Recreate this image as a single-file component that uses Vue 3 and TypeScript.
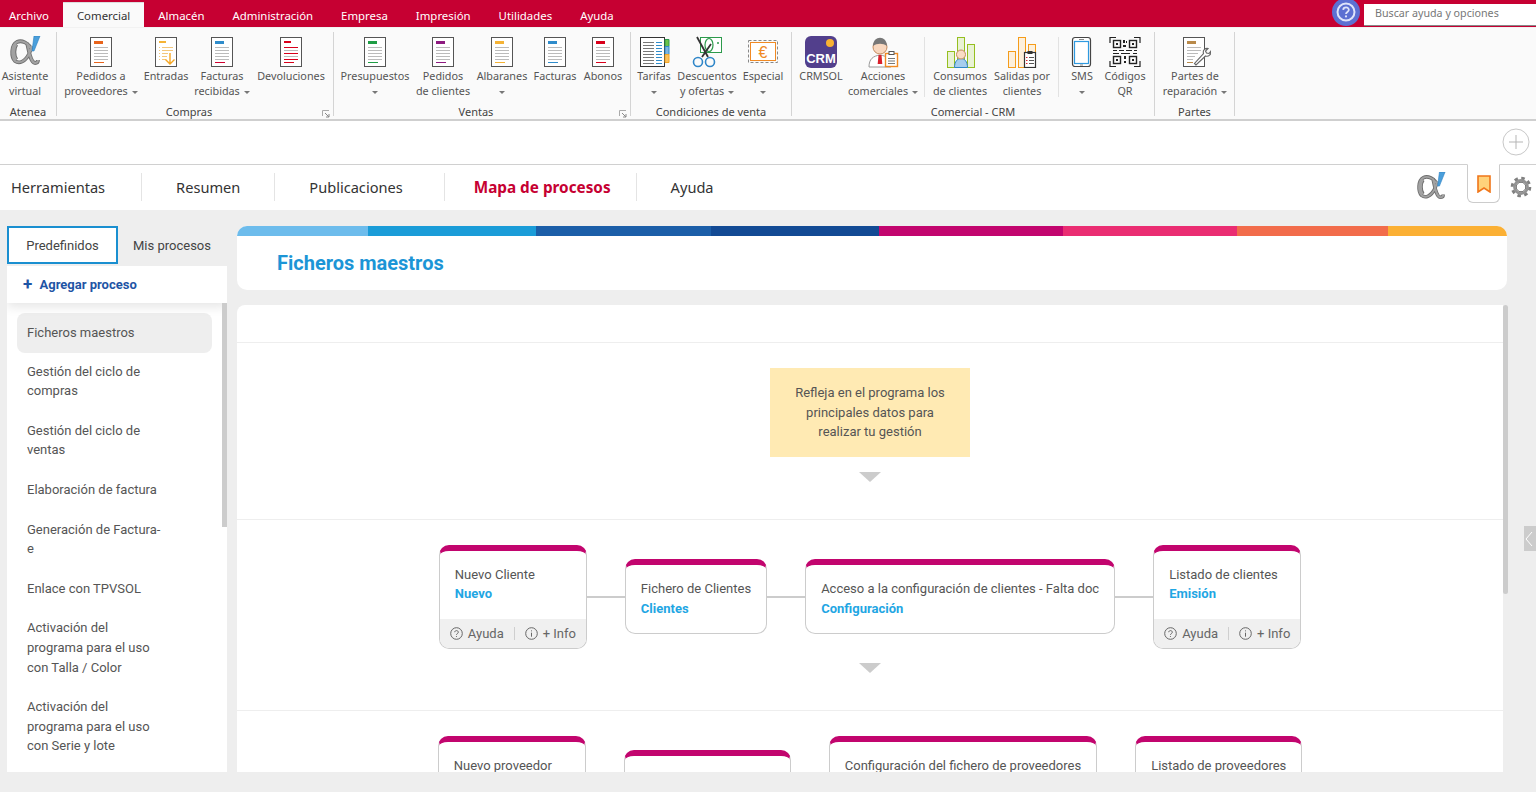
<script setup lang="ts">
interface Tool {
  lines: string[]
  w: number
  icon: string
  color?: string
  foot?: string
  caret?: boolean
}

interface Group {
  label: string
  width: number
  launcher?: boolean
  sets: Tool[][]
}

interface FlowCard {
  title: string
  link: string
  footer?: boolean
}

const menu = ['Almacén', 'Administración', 'Empresa', 'Impresión', 'Utilidades', 'Ayuda']

const groups: Group[] = [
  {
    label: 'Atenea',
    width: 57,
    sets: [[{ lines: ['Asistente', 'virtual'], w: 50, icon: 'alpha' }]]
  },
  {
    label: 'Compras',
    width: 277,
    launcher: true,
    sets: [[
      { lines: ['Pedidos a', 'proveedores'], w: 78, icon: 'doc', color: '#e8641c', caret: true },
      { lines: ['Entradas'], w: 50, icon: 'entry' },
      { lines: ['Facturas', 'recibidas'], w: 60, icon: 'doc', color: '#2f8ccb', foot: '#d0002f', caret: true },
      { lines: ['Devoluciones'], w: 76, icon: 'return' }
    ]]
  },
  {
    label: 'Ventas',
    width: 297,
    launcher: true,
    sets: [[
      { lines: ['Presupuestos', ''], w: 74, icon: 'doc', color: '#1f9d45', caret: true },
      { lines: ['Pedidos', 'de clientes'], w: 60, icon: 'doc', color: '#8e1a80' },
      { lines: ['Albaranes', ''], w: 56, icon: 'doc', color: '#f5b335', caret: true },
      { lines: ['Facturas'], w: 48, icon: 'doc', color: '#2f8ccb' },
      { lines: ['Abonos'], w: 46, icon: 'doc', color: '#d9001b' }
    ]]
  },
  {
    label: 'Condiciones de venta',
    width: 161,
    sets: [[
      { lines: ['Tarifas', ''], w: 38, icon: 'rates', caret: true },
      { lines: ['Descuentos', 'y ofertas'], w: 66, icon: 'cut', caret: true },
      { lines: ['Especial', ''], w: 44, icon: 'euro', caret: true }
    ]]
  },
  {
    label: 'Comercial - CRM',
    width: 363,
    sets: [
      [
        { lines: ['CRMSOL'], w: 50, icon: 'crm' },
        { lines: ['Acciones', 'comerciales'], w: 72, icon: 'person', caret: true }
      ],
      [
        { lines: ['Consumos', 'de clientes'], w: 60, icon: 'usage' },
        { lines: ['Salidas por', 'clientes'], w: 62, icon: 'output' }
      ],
      [
        { lines: ['SMS', ''], w: 36, icon: 'phone', caret: true },
        { lines: ['Códigos', 'QR'], w: 48, icon: 'qr' }
      ]
    ]
  },
  {
    label: 'Partes',
    width: 80,
    sets: [[{ lines: ['Partes de', 'reparación'], w: 72, icon: 'repair', caret: true }]]
  }
]

const navItems = ['Herramientas', 'Resumen', 'Publicaciones', 'Mapa de procesos', 'Ayuda']

const processes = [
  'Ficheros maestros',
  'Gestión del ciclo de compras',
  'Gestión del ciclo de ventas',
  'Elaboración de factura',
  'Generación de Factura-e',
  'Enlace con TPVSOL',
  'Activación del programa para el uso con Talla / Color',
  'Activación del programa para el uso con Serie y lote'
]

const stripes = [
  { color: '#6dbcec', w: 131 },
  { color: '#1a9cd8', w: 168 },
  { color: '#1b5ea8', w: 175 },
  { color: '#124a94', w: 168 },
  { color: '#c2056e', w: 184 },
  { color: '#ea2d72', w: 174 },
  { color: '#f26c4b', w: 151 },
  { color: '#fbb034', w: 119 }
]

const flows: FlowCard[][] = [
  [
    { title: 'Nuevo Cliente', link: 'Nuevo', footer: true },
    { title: 'Fichero de Clientes', link: 'Clientes' },
    { title: 'Acceso a la configuración de clientes - Falta doc', link: 'Configuración' },
    { title: 'Listado de clientes', link: 'Emisión', footer: true }
  ],
  [
    { title: 'Nuevo proveedor', link: 'Nuevo', footer: true },
    { title: 'Fichero de proveedores', link: 'Proveedores' },
    { title: 'Configuración del fichero de proveedores', link: 'Configuración', footer: true },
    { title: 'Listado de proveedores', link: 'Emisión', footer: true }
  ]
]

const qrCells = [
  'M14 4h2v3h-2z', 'M17 5h1v2h-1z', 'M14 9h3v2h-3z', 'M4 14h4v1H4z', 'M10 14h5v1H10z',
  'M17 14h6v1h-6z', 'M25 14h3v1h-3z', 'M4 17h6v1H4z', 'M12 17h9v1h-9z', 'M24 17h4v1h-4z', 'M15 20h2v3h-2z',
  'M15 25h2v2h-2z'
]

const alphaBowl = 'M23 15C20 6 12 4 8 6 2 9 2 21 6 25c4 3 10 1 14-7l3-8M18 7c2 7 3 19 8 20 2 0 3-1 3-3'
</script>

<template>
  <div class="app">
    <div class="topbar">
      <div class="menu-item first">Archivo</div>
      <div class="menu-item active">Comercial</div>
      <div v-for="m in menu" :key="m" class="menu-item">{{ m }}</div>
      <div class="top-right">
        <svg class="help" width="30" height="30" viewBox="0 0 30 30">
          <circle cx="15" cy="14" r="14" fill="#5c70d2" />
          <circle cx="15" cy="14" r="8.5" fill="none" stroke="#dfe4fa" stroke-width="2" />
          <path d="M12.2 11.8c.3-3.4 5.800-3.200 5.600.2-.1 2-2.800 1.900-2.800 4" fill="none" stroke="#dfe4fa" stroke-width="1.8" />
          <circle cx="15" cy="18.4" r="1.1" fill="#dfe4fa" />
        </svg>
        <div class="search">Buscar ayuda y opciones</div>
      </div>
    </div>

    <div class="ribbon">
      <div v-for="g in groups" :key="g.label" class="group" :style="{ width: g.width + 'px' }">
        <div class="group-tools">
          <div v-for="(set, si) in g.sets" :key="si" class="tool-set">
            <div v-for="t in set" :key="t.lines.join()" class="tool" :style="{ width: t.w + 'px' }">
              <svg class="tool-icon" width="32" height="32" viewBox="0 0 32 32">
                <template v-if="t.icon === 'doc' || t.icon === 'return' || t.icon === 'entry'">
                  <rect x="5.5" y="1.5" width="21" height="29" fill="#fff" stroke="#555" />
                </template>
                <template v-if="t.icon === 'doc'">
                  <rect x="9" y="5" width="9" height="3" :fill="t.color" />
                  <path d="M9 11.500h14M9 14.500h14M9 17.500h14M9 20.500h14M9 23.500h14" stroke="#bbb" />
                  <path d="M9 26.500h10" :stroke="t.foot || t.color" />
                </template>
                <template v-else-if="t.icon === 'return'">
                  <rect x="9" y="5" width="7" height="2" fill="#d9001b" />
                  <path d="M9 11.500h14M9 17.500h14M9 23.500h14" stroke="#d9001b" />
                  <path d="M9 14.500h14M9 20.500h14" stroke="#bbb" />
                  <path d="M9 26.500h10" stroke="#d9001b" />
                </template>
                <template v-else-if="t.icon === 'entry'">
                  <rect x="9" y="5" width="7" height="2" fill="#f5b335" />
                  <path d="M9 11.500h1M9 14.500h1M9 17.500h1M9 20.500h1M9 23.500h1M12 11.500h11M12 14.500h11M12 17.500h6M12 20.500h5M12 23.500h4" stroke="#f3c77c" />
                  <path d="M20 17v11M15.500 23.500l4.500 4.500 4.500-4.500" fill="none" stroke="#f5a623" stroke-width="1.400" />
                </template>
                <template v-else-if="t.icon === 'alpha'">
                  <path :d="alphaBowl" fill="none" stroke="#6e6e6e" stroke-width="3.800" />
                  <path d="M7 8c-3 4-3 12 0 16" fill="none" stroke="#6e6e6e" stroke-width="5" />
                  <path :d="alphaBowl" fill="none" stroke="#a2a2a2" stroke-width="2" />
                  <path d="M7 8c-3 4-3 12 0 16" fill="none" stroke="#a2a2a2" stroke-width="3" />
                  <path d="M25 0h6l-6 15h-2z" fill="#4b9fdb" stroke="#2a7fc0" stroke-width=".6" />
                </template>
                <template v-else-if="t.icon === 'rates'">
                  <rect x="2.500" y="1.500" width="24" height="29" fill="#fff" stroke="#333" />
                  <path d="M27 3.500h4v7h-4z" fill="#6cc24a" stroke="#2c9a4b" />
                  <path d="M27 10.500h4v8h-4z" fill="#7fb5e0" stroke="#2f8ccb" />
                  <path d="M27 18.500h4v8h-4z" fill="#fbc25e" stroke="#f5a623" />
                  <path d="M5 6.500h11M5 9.500h11M5 12.500h11M5 15.500h11M5 18.500h11M5 21.500h11M5 24.500h11M5 27.500h11" stroke="#777" />
                  <path d="M18 6.500h6M18 9.500h6M18 12.500h6M18 15.500h6M18 18.500h6M18 21.500h6M18 24.500h6M18 27.500h6" stroke="#2f8ccb" />
                </template>
                <template v-else-if="t.icon === 'cut'">
                  <rect x="9.500" y="1.500" width="21" height="15" fill="#fff" stroke="#2c9a4b" />
                  <ellipse cx="18" cy="9" rx="4" ry="6.500" fill="none" stroke="#2c9a4b" stroke-width="1.200" />
                  <circle cx="27" cy="7" r="1" fill="#2c9a4b" />
                  <path d="M6 1l11 20M20 8l-9 13" stroke="#333" stroke-width="1.800" fill="none" />
                  <circle cx="7" cy="26" r="4.500" fill="none" stroke="#2f86c8" stroke-width="1.600" />
                  <circle cx="19" cy="26" r="4.500" fill="none" stroke="#2f86c8" stroke-width="1.600" />
                </template>
                <template v-else-if="t.icon === 'euro'">
                  <rect x="1.500" y="4.500" width="29" height="22" fill="none" stroke="#888" stroke-dasharray="3 2" />
                  <rect x="3.500" y="6.500" width="25" height="18" fill="#fff" stroke="#f08a24" />
                  <text x="16" y="21.500" text-anchor="middle" font-size="16" fill="#f08a24" font-family="Liberation Sans">€</text>
                </template>
                <template v-else-if="t.icon === 'crm'">
                  <rect x="0" y="0" width="32" height="32" rx="6" fill="#523f8c" />
                  <circle cx="25" cy="7" r="4" fill="#f9b233" />
                  <text x="16" y="27" text-anchor="middle" font-size="13" font-weight="700" fill="#fff" font-family="Liberation Sans">CRM</text>
                </template>
                <template v-else-if="t.icon === 'person'">
                  <path d="M2 31c0-8 4-11 11-12 7 1 11 4 11 12z" fill="#fff" stroke="#999" />
                  <path d="M11.500 19h3l.8 9h-4.600z" fill="#d9202c" />
                  <circle cx="13" cy="11" r="7" fill="#f8d7bf" stroke="#c48a5e" />
                  <path d="M6 10c0-11 14-11 14 0-4-3-10-3-14 0z" fill="#777" />
                  <rect x="18.500" y="17.500" width="12" height="13" fill="#fff" stroke="#f08a24" stroke-width="1.400" />
                  <rect x="22" y="15.500" width="5" height="3" fill="#fff" stroke="#555" />
                  <path d="M21 22.500h7M21 25h7M21 27.500h7" stroke="#777" />
                </template>
                <template v-else-if="t.icon === 'usage'">
                  <rect x="3.500" y="15.500" width="7" height="16" fill="#e9f2d5" stroke="#95bf1f" />
                  <rect x="13.500" y="1.500" width="7" height="30" fill="#e9f2d5" stroke="#95bf1f" />
                  <rect x="23.500" y="8.500" width="7" height="23" fill="#e9f2d5" stroke="#95bf1f" />
                  <path d="M10.500 31.500c0-6 3-9 6.500-9s6.500 3 6.500 9z" fill="#a6cdee" stroke="#2f86c8" />
                  <circle cx="17" cy="18.500" r="4.500" fill="#fbdcc5" stroke="#c48a5e" />
                </template>
                <template v-else-if="t.icon === 'output'">
                  <rect x="2.500" y="15.500" width="7" height="16" fill="#fdf0dc" stroke="#f59c1a" />
                  <rect x="12.500" y="1.500" width="7" height="30" fill="#fdf0dc" stroke="#f59c1a" />
                  <rect x="22.500" y="8.500" width="7" height="23" fill="#fdf0dc" stroke="#f59c1a" />
                  <rect x="18.500" y="16.500" width="11" height="15" fill="#fff" stroke="#333" stroke-width="1.200" />
                  <rect x="21.500" y="15" width="5" height="3" fill="#333" />
                  <path d="M20 21.500h1.500M20 24.500h1.500M20 27.500h1.500" stroke="#d9202c" stroke-width="1.200" />
                  <path d="M23 21.500h5M23 24.500h5M23 27.500h5" stroke="#555" />
                </template>
                <template v-else-if="t.icon === 'phone'">
                  <rect x="6.500" y="1.500" width="18" height="29" rx="2.500" fill="#fff" stroke="#444" stroke-width="1.200" />
                  <rect x="8.500" y="5.500" width="14" height="22" fill="#fff" stroke="#2f9ae0" stroke-width="1.200" />
                  <path d="M13 3.500h5M14 29h3" stroke="#888" />
                </template>
                <template v-else-if="t.icon === 'qr'">
                  <path d="M1 7V1.500h6M25 1.500h6V7M1 25v5.500h6M25 30.500h6V25" fill="none" stroke="#222" stroke-width="1.200" />
                  <rect x="4.500" y="4.500" width="7" height="7" fill="none" stroke="#222" stroke-width="1.400" />
                  <rect x="20.500" y="4.500" width="7" height="7" fill="none" stroke="#222" stroke-width="1.400" />
                  <rect x="4.500" y="20.500" width="7" height="7" fill="none" stroke="#222" stroke-width="1.400" />
                  <rect x="20.500" y="20.500" width="7" height="7" fill="none" stroke="#222" stroke-width="1.400" />
                  <path d="M7 7h2v2H7zM23 7h2v2h-2zM7 23h2v2H7zM23 23h2v2h-2z" fill="#222" />
                  <path v-for="c in qrCells" :key="c" :d="c" fill="#222" />
                </template>
                <template v-else-if="t.icon === 'repair'">
                  <rect x="4.500" y="1.500" width="21" height="29" fill="#fff" stroke="#555" />
                  <rect x="8" y="5" width="9" height="3" fill="#b98a4a" />
                  <path d="M8 11.500h14M8 14.500h14M8 17.500h11M8 20.500h8M8 23.500h6" stroke="#bbb" />
                  <path d="M8 26.500h6" stroke="#b98a4a" />
                  <path d="M17 29l-1.500-1.500 9-10c-1-3 1.500-5.500 4.500-5l-2.500 2.500 1 2 2.500.5 2-2.500c.5 3.500-2.500 6-5.500 5z" fill="#fff" stroke="#666" stroke-width="1.100" />
                </template>
              </svg>
              <div class="tool-label">
                <div v-for="(line, li) in t.lines" :key="li" class="tool-line">
                  {{ line }}<i v-if="t.caret && li === t.lines.length - 1" class="caret" :class="{ solo: !line }"></i>
                </div>
              </div>
            </div>
          </div>
        </div>
        <div class="group-label" :class="{ offset: g.launcher }">
          {{ g.label }}
          <svg v-if="g.launcher" class="launcher" width="8" height="8" viewBox="0 0 8 8">
            <path d="M.5 6V.5H7" fill="none" stroke="#aaa" />
            <path d="M3 3l4 4M7 4v3H4" fill="none" stroke="#888" />
          </svg>
        </div>
      </div>
    </div>

    <div class="tabstrip">
      <div class="add-btn">
        <svg width="28" height="28" viewBox="0 0 28 28">
          <circle cx="14" cy="14" r="13" fill="#fff" stroke="#c8c8c8" />
          <path d="M14 7v14M7 14h14" stroke="#b5b5b5" />
        </svg>
      </div>
    </div>

    <div class="nav">
      <div
        v-for="(n, i) in navItems"
        :key="n"
        class="nav-item"
        :class="{ current: i === 3, last: i === navItems.length - 1 }"
      >{{ n }}</div>
      <div class="nav-right">
        <svg class="nav-logo" width="32" height="30" viewBox="0 0 32 32">
          <path :d="alphaBowl" fill="none" stroke="#6e6e6e" stroke-width="3.800" />
          <path d="M7 8c-3 4-3 12 0 16" fill="none" stroke="#6e6e6e" stroke-width="5" />
          <path :d="alphaBowl" fill="none" stroke="#a2a2a2" stroke-width="2" />
          <path d="M7 8c-3 4-3 12 0 16" fill="none" stroke="#a2a2a2" stroke-width="3" />
          <path d="M25 0h6l-6 15h-2z" fill="#4b9fdb" stroke="#2a7fc0" stroke-width=".6" />
        </svg>
        <div class="mark-tab">
          <svg width="14" height="18" viewBox="0 0 14 18">
            <path d="M1 1h12v16l-6-4-6 4z" fill="#ffd27a" stroke="#f0761a" stroke-width="1.600" />
          </svg>
        </div>
        <svg class="gear" width="22" height="22" viewBox="0 0 22 22">
          <circle cx="11" cy="11" r="8.800" fill="none" stroke="#808080" stroke-width="3" stroke-dasharray="3.500 3.410" />
          <circle cx="11" cy="11" r="6.600" fill="none" stroke="#929292" stroke-width="2.600" />
          <circle cx="11" cy="11" r="4.800" fill="#fff" stroke="#666" />
        </svg>
      </div>
    </div>

    <div class="page">
      <aside class="side">
        <div class="side-tabs">
          <div class="side-tab selected">Predefinidos</div>
          <div class="side-tab">Mis procesos</div>
        </div>
        <div class="side-panel">
          <div class="side-add"><span class="plus">+</span> Agregar proceso</div>
          <div class="side-list">
            <div
              v-for="(p, i) in processes"
              :key="p"
              class="side-item"
              :class="{ selected: i === 0 }"
            ><span>{{ p }}</span></div>
          </div>
          <div class="side-scroll"></div>
        </div>
      </aside>

      <main class="content">
        <section class="title-card">
          <div class="stripes">
            <div
              v-for="s in stripes"
              :key="s.color"
              :style="{ background: s.color, flexGrow: s.w }"
            ></div>
          </div>
          <h1>Ficheros maestros</h1>
        </section>

        <section class="board">
          <div class="board-inner">
            <div class="board-top"></div>
            <div class="board-row">
              <div class="note">Refleja en el programa los principales datos para realizar tu gestión</div>
              <div class="arrow first"></div>
            </div>
            <div v-for="(flow, fi) in flows" :key="fi" class="board-row">
              <div class="flow">
                <template v-for="(c, ci) in flow" :key="c.title">
                  <div v-if="ci > 0" class="connector"></div>
                  <div class="card" :class="{ footed: c.footer }">
                    <div class="card-body">
                      <div class="card-title">{{ c.title }}</div>
                      <div class="card-link">{{ c.link }}</div>
                    </div>
                    <div v-if="c.footer" class="card-foot">
                      <span class="foot-btn">
                        <svg width="13" height="13" viewBox="0 0 13 13">
                          <circle cx="6.500" cy="6.500" r="5.800" fill="none" stroke="#666" />
                          <path d="M4.700 5.200c.1-2.200 3.700-2.100 3.600.1 0 1.300-1.800 1.200-1.800 2.500" fill="none" stroke="#666" />
                          <circle cx="6.500" cy="9.500" r=".6" fill="#666" />
                        </svg>
                        Ayuda
                      </span>
                      <span class="foot-sep"></span>
                      <span class="foot-btn">
                        <svg width="13" height="13" viewBox="0 0 13 13">
                          <circle cx="6.500" cy="6.500" r="5.800" fill="none" stroke="#666" />
                          <path d="M6.500 5.700v4" stroke="#666" />
                          <circle cx="6.500" cy="3.800" r=".6" fill="#666" />
                        </svg>
                        + Info
                      </span>
                    </div>
                  </div>
                </template>
              </div>
              <div class="arrow"></div>
            </div>
          </div>
          <div class="board-track"><div class="board-thumb"></div></div>
        </section>
      </main>

      <div class="collapse">
        <svg width="10" height="18" viewBox="0 0 10 18">
          <path d="M8 2L2 9l6 7" fill="none" stroke="#fff" />
        </svg>
      </div>
    </div>
  </div>
</template>

<style>
html,
body {
  margin: 0;
  background: #eeeeee;
  overflow: hidden;
}
</style>

<style scoped>
.app {
  height: 792px;
  display: flex;
  flex-direction: column;
  overflow: hidden;
  font-family: Roboto, "Liberation Sans", sans-serif;
  color: #555;
}

.topbar {
  height: 27px;
  flex: none;
  display: flex;
  align-items: flex-end;
  background: #c60032;
  font-family: "Noto Sans", "Open Sans", sans-serif;
  font-size: 11.4px;
  color: #fff;
}

.menu-item {
  height: 24px;
  line-height: 26px;
  padding: 0 14px;
}

.menu-item.first {
  padding: 0 14px 0 9px;
}

.menu-item.active {
  background: #fafafa;
  color: #333;
  box-shadow: 0 -1px 0 #ddd;
}

.top-right {
  margin-left: auto;
  align-self: stretch;
  display: flex;
  position: relative;
}

.help {
  position: absolute;
  left: -33px;
  top: -2px;
}

.search {
  width: 161px;
  height: 21px;
  margin-top: 4px;
  padding-left: 11px;
  background: #fff;
  border-bottom: 1px solid #888;
  color: #777;
  font-size: 10.7px;
  line-height: 19px;
}

.ribbon {
  box-sizing: border-box;
  height: 94px;
  flex: none;
  display: flex;
  background: #fafafa;
  border-top: 1px solid #f2f2f2;
  border-bottom: 2px solid #cfcfcf;
  font-family: "Noto Sans", "Open Sans", sans-serif;
  font-size: 10.8px;
  color: #555;
}

.group {
  flex: none;
  display: flex;
  flex-direction: column;
  box-sizing: border-box;
  margin: 4px 0 3px;
  border-right: 1px solid #d4d4d4;
}

.group-tools {
  flex: 1;
  display: flex;
  padding-left: 4px;
}

.group:first-child .group-tools {
  padding-left: 0;
}

.group:nth-child(2) .group-tools {
  padding-left: 5px;
}

.tool-set {
  display: flex;
  gap: 1px;
  height: 60px;
  margin: 5px 5px 0 0;
  padding-right: 5px;
  border-right: 1px solid #e2e2e2;
}

.tool-set:last-child {
  border-right: 0;
  margin-right: 0;
  padding-right: 0;
}

.tool {
  flex: none;
  display: flex;
  flex-direction: column;
  align-items: center;
  white-space: nowrap;
}

.tool-icon {
  flex: none;
  margin-top: -1px;
}

.tool-label {
  text-align: center;
}

.tool-line {
  height: 15px;
  line-height: 15px;
}

.caret {
  display: inline-block;
  width: 0;
  height: 0;
  margin-left: 4px;
  vertical-align: middle;
  border-left: 3px solid transparent;
  border-right: 3px solid transparent;
  border-top: 3px solid #777;
}

.caret.solo {
  margin-left: 0;
}

.group-label {
  position: relative;
  height: 12px;
  line-height: 16px;
  font-size: 11px;
  text-align: center;
  color: #444;
}

.group-label.offset {
  padding-right: 12px;
}

.launcher {
  position: absolute;
  right: 3px;
  top: 6px;
}

.tabstrip {
  box-sizing: border-box;
  height: 44px;
  flex: none;
  display: flex;
  justify-content: flex-end;
  align-items: center;
  padding-bottom: 2px;
  background: #fff;
  border-bottom: 1px solid #d0d0d0;
}

.add-btn {
  display: flex;
  margin-right: 6px;
}

.nav {
  box-sizing: border-box;
  height: 45px;
  flex: none;
  display: flex;
  align-items: center;
  padding-bottom: 2px;
  background: #fff;
  font-family: "Noto Sans", "Open Sans", sans-serif;
  font-size: 14.6px;
  color: #333;
}

.nav-item {
  height: 28px;
  line-height: 28px;
  padding: 0 34px;
  border-right: 1px solid #e4e4e4;
}

.nav-item:first-child {
  padding-left: 11px;
  padding-right: 36px;
}

.nav-item:nth-child(3) {
  padding-right: 41px;
}

.nav-item.last {
  border-right: 0;
}

.nav-item.current {
  color: #c60032;
  font-size: 15.3px;
  font-weight: 700;
  padding-left: 29px;
  padding-right: 25px;
}

.nav-right {
  margin-left: auto;
  align-self: stretch;
  display: flex;
  align-items: center;
}

.nav-logo {
  margin-right: 20px;
}

.mark-tab {
  align-self: flex-start;
  box-sizing: border-box;
  width: 33px;
  height: 39px;
  margin-top: -1px;
  display: flex;
  align-items: center;
  justify-content: center;
  background: #fff;
  border: 1px solid #ccc;
  border-top: 1px solid #fff;
  border-radius: 0 0 6px 6px;
}

.gear {
  margin: 0 4px 0 10px;
}

.page {
  flex: 1;
  min-height: 0;
  display: flex;
  position: relative;
  padding: 16px 0 20px 7px;
  background: #eeeeee;
  gap: 10px;
}

.side {
  width: 220px;
  flex: none;
  display: flex;
  flex-direction: column;
}

.side-tabs {
  display: flex;
  height: 38px;
  margin-bottom: 2px;
  font-size: 13px;
}

.side-tab {
  line-height: 40px;
  padding: 0 16px 0 15px;
  color: #444;
}

.side-tab.selected {
  box-sizing: border-box;
  width: 111px;
  padding: 2px 0 0;
  text-align: center;
  background: #fff;
  border: 2px solid #1a8fd0;
  line-height: 32px;
}

.side-panel {
  flex: 1;
  min-height: 0;
  position: relative;
  overflow: hidden;
  background: #fff;
}

.side-add {
  position: relative;
  height: 37px;
  padding-left: 16px;
  line-height: 37px;
  font-size: 13px;
  font-weight: 700;
  color: #1f55a5;
  box-shadow: 0 4px 10px rgba(0, 0, 0, 0.1);
}

.plus {
  font-size: 17px;
  margin-right: 4px;
  vertical-align: -1px;
}

.side-list {
  padding: 10px 15px 0 10px;
}

.side-item {
  padding: 10px 45px 10px 10px;
  font-size: 13px;
  line-height: 19.6px;
  color: #555;
  border-radius: 8px;
}

.side-item.selected {
  margin-bottom: -1px;
  background: #eeeeee;
}

.side-scroll {
  position: absolute;
  right: 0;
  top: 37px;
  width: 5px;
  height: 224px;
  background: #cccccc;
}

.content {
  width: 1270px;
  flex: none;
  display: flex;
  flex-direction: column;
  gap: 15px;
  min-height: 0;
}

.title-card {
  flex: none;
  height: 64px;
  background: #fff;
  border-radius: 10px;
  overflow: hidden;
}

.stripes {
  display: flex;
  height: 10px;
}

.stripes div {
  flex-basis: 0;
}

.title-card h1 {
  margin: 0;
  padding-left: 40px;
  font-size: 20px;
  font-weight: 700;
  line-height: 54px;
  color: #1c95d6;
}

.board {
  flex: 1;
  min-height: 0;
  display: flex;
  margin-right: -1px;
}

.board-inner {
  flex: 1;
  min-width: 0;
  overflow: hidden;
  background: #fff;
  border-radius: 8px 0 0 0;
}

.board-track {
  width: 5px;
  flex: none;
}

.board-thumb {
  height: 289px;
  border-radius: 3px;
  background: #cccccc;
}

.board-top {
  height: 37px;
  border-bottom: 1px solid #eeeeee;
}

.board-row {
  display: flex;
  flex-direction: column;
  align-items: center;
  padding: 25px 0 37px;
  border-bottom: 1px solid #eeeeee;
}

.note {
  box-sizing: border-box;
  width: 200px;
  padding: 15px 20px;
  background: #ffeab3;
  font-size: 13px;
  line-height: 19.5px;
  text-align: center;
  color: #555;
}

.arrow {
  width: 0;
  height: 0;
  margin-top: 14px;
  border-left: 11px solid transparent;
  border-right: 11px solid transparent;
  border-top: 10px solid #cccccc;
}

.arrow.first {
  margin-top: 15px;
}

.flow {
  display: flex;
  align-items: center;
}

.connector {
  width: 38px;
  height: 2px;
  background: #cccccc;
}

.card {
  box-sizing: border-box;
  background: #fff;
  border: 1px solid #cccccc;
  border-top: 6px solid #c2056e;
  border-radius: 10px;
  overflow: hidden;
}

.card.footed {
  min-width: 148px;
}

.card-body {
  padding: 14px 15px 15px;
  font-size: 13px;
  line-height: 19.5px;
}

.card-title {
  color: #555;
  white-space: nowrap;
}

.card-link {
  font-weight: 700;
  color: #1fa6e3;
}

.card-foot {
  height: 29px;
  display: flex;
  align-items: center;
  padding-left: 10px;
  background: #f0f0f0;
  font-size: 13px;
  color: #666;
}

.foot-btn {
  display: flex;
  align-items: center;
  gap: 5px;
}

.foot-sep {
  width: 1px;
  height: 13px;
  margin: 0 10px;
  background: #cfcfcf;
}

.collapse {
  position: absolute;
  right: 0;
  top: 316px;
  width: 12px;
  height: 25px;
  display: flex;
  align-items: center;
  background: #cccccc;
}
</style>
